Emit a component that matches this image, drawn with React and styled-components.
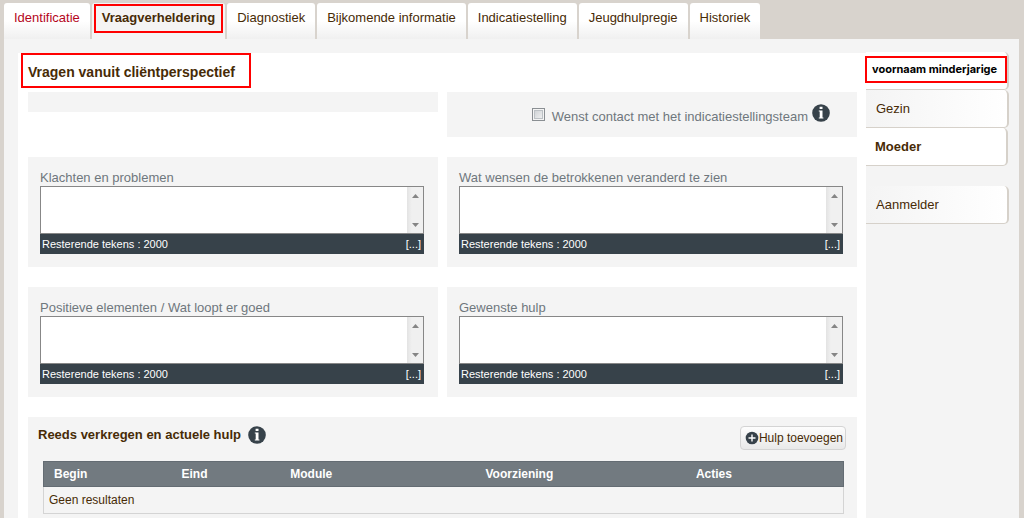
import React, { useId } from "react";
import styled, { createGlobalStyle, css } from "styled-components";

const color = {
  page: "#d8d3cd",
  panel: "#f4f4f4",
  text: "#472b06",
  label: "#6f777d",
  dark: "#37424a",
  head: "#727a80",
  line: "#d6d1ca",
  mark: "#ff0000",
};

const GlobalStyle = createGlobalStyle`
  *, *::before, *::after { box-sizing: border-box; }
  body {
    margin: 0;
    background: ${color.page};
    color: ${color.text};
    font: 13px/16px "Liberation Sans", Arial, sans-serif;
  }
  button, input, textarea { font: inherit; color: inherit; margin: 0; }
`;

const Page = styled.div`
  display: flex;
  flex-direction: column;
  min-height: 100vh;
  padding: 3px 5px 0 4px;
`;

const Tabs = styled.nav`
  display: flex;
  gap: 2px;
`;

const Tab = styled.a`
  position: relative;
  height: 36px;
  padding: 7px 10px 0;
  border-radius: 3px 3px 0 0;
  background: linear-gradient(#fff 50%, #f0f0f0);
  color: ${(p) => (p.$alert ? "#b5061c" : color.text)};
  text-decoration: none;
  white-space: nowrap;
  ${(p) =>
    p.$active &&
    css`
      background: ${color.panel};
      font-weight: bold;
    `}
`;

const Mark = styled.span`
  position: absolute;
  inset: ${(p) => p.$inset};
  border: 2px solid ${color.mark};
  pointer-events: none;
`;

const Panel = styled.div`
  flex: 1;
  display: flex;
  padding: 14px 10px 0 14px;
  background: ${color.panel};
`;

const Main = styled.main`
  flex: 1;
  display: flex;
  flex-direction: column;
  gap: 20px;
  min-width: 0;
  padding: 0 9px 0 10px;
  background: #fff;
`;

const Title = styled.h1`
  position: relative;
  align-self: flex-start;
  margin: 0 0 -16px;
  padding: 11px 16px 8px 0;
  font-size: 14px;
  line-height: 16px;
`;

const Columns = styled.div`
  display: grid;
  grid-template-columns: 1fr 1fr;
  align-items: start;
  gap: 20px 9px;
`;

const Card = styled.section`
  min-height: ${(p) => (p.$empty ? "20px" : "0")};
  padding: ${(p) => (p.$empty ? "0" : "12px 14px 13px 12px")};
  background: ${color.panel};
`;

const ContactCard = styled(Card)`
  display: flex;
  justify-content: flex-end;
  gap: 4px;
  height: 45px;
  padding: 12px 27px 0 12px;
`;

const CheckLabel = styled.label`
  display: flex;
  align-items: flex-start;
  gap: 7px;
  padding-top: 4px;
  color: ${color.label};
  line-height: 18px;
`;

const Check = styled.input`
  appearance: none;
  width: 13px;
  height: 13px;
  border: 1px solid #8a8f93;
  background: linear-gradient(135deg, #c8ccd0, #f6f6f6);
  box-shadow: inset 0 0 0 1px #f4f4f4, inset 0 0 0 2px #bcc1c5;
`;

const FieldLabel = styled.label`
  display: block;
  height: 17px;
  color: ${color.label};
  line-height: 18px;
`;

const FieldBox = styled.div`
  display: flex;
  height: 48px;
  border: 1px solid #878787;
  background: #fff;
`;

const Area = styled.textarea`
  flex: 1;
  min-width: 0;
  padding: 2px;
  border: 0;
  outline: 0;
  resize: none;
  overflow: hidden;
  background: transparent;
`;

const ScrollStrip = styled.span`
  display: flex;
  flex-direction: column;
  justify-content: space-between;
  align-items: center;
  width: 16px;
  padding: 7px 0 6px;
  background: linear-gradient(90deg, #e3e3e3, #f0f0f0 30%);
`;

const FieldFoot = styled.div`
  display: flex;
  justify-content: space-between;
  height: 20px;
  padding: 0 3px 0 2px;
  background: ${color.dark};
  color: #fff;
  font-size: 11px;
  line-height: 20px;
`;

const MoreLink = styled.a`
  color: inherit;
  text-decoration: none;
`;

const HelpSection = styled.section`
  flex: 1;
  padding: 9px 11px 3px 10px;
  background: ${color.panel};
`;

const HelpHead = styled.header`
  display: flex;
  justify-content: space-between;
  align-items: flex-start;
  margin-bottom: 11px;
`;

const HelpTitle = styled.h2`
  display: flex;
  align-items: center;
  gap: 7px;
  margin: 0;
  font-size: 13px;
  line-height: 16px;
`;

const AddButton = styled.button`
  display: flex;
  align-items: center;
  height: 24px;
  padding: 0 2px 0 4px;
  border: 1px solid #d4d4d4;
  border-radius: 4px;
  background: linear-gradient(#fdfdfd, #e9e9e9);
  font-size: 12px;
  white-space: nowrap;
`;

const Table = styled.table`
  width: calc(100% - 7px);
  margin-left: 5px;
  border: 1px solid #d4d4d4;
  border-collapse: collapse;
  table-layout: fixed;
  font-size: 12px;
  line-height: 16px;
`;

const HeadRow = styled.tr`
  height: 25px;
  border: 1px solid #646c73;
  background: ${color.head};
  color: #fff;
`;

const HeadCell = styled.th`
  width: ${(p) => p.$width};
  padding: 0 10px;
  text-align: left;
`;

const Cell = styled.td`
  height: 27px;
  padding: 0 5px;
`;

const Side = styled.nav`
  display: flex;
  flex-direction: column;
  align-items: flex-start;
  width: 143px;
  margin-top: -1px;
`;

const SideLink = styled.a`
  position: relative;
  width: ${(p) => (p.$active ? "142px" : "143px")};
  height: 38px;
  margin-top: ${(p) => (p.$apart ? "20px" : "0")};
  padding: 11px 0 0 ${(p) => (p.$active ? "9px" : "10px")};
  border: solid ${color.line};
  border-width: 0 2px 1px 0;
  border-radius: 0 5px 5px 0;
  background: ${(p) => (p.$active ? "#fff" : "linear-gradient(90deg, #f4f4f4, #fff)")};
  color: ${color.text};
  font-weight: ${(p) => (p.$active ? "bold" : "normal")};
  text-decoration: none;
`;

const ChildLink = styled(SideLink)`
  padding: 10px 0 0 6px;
  color: #000;
  font: bold 11px/15px Inter, sans-serif;
  background: #fff;
  white-space: nowrap;
`;

function InfoIcon() {
  return (
    <svg width="18" height="18" viewBox="0 0 18 18" role="img" aria-label="Info">
      <circle cx="9" cy="9" r="8.8" fill={color.dark} />
      <path d="M7.6 2.8h2.9v2.2H7.6zM6.8 6.4h3.7v7.2h.9v1H6.8v-1h.9V7.4h-.9z" fill="#fff" />
    </svg>
  );
}

function PlusIcon() {
  return (
    <svg width="14" height="14" viewBox="0 0 14 14" aria-hidden="true">
      <circle cx="7" cy="7" r="6.3" fill={color.dark} />
      <path d="M7 3.5v7M3.5 7h7" stroke="#fff" strokeWidth="1.4" />
    </svg>
  );
}

function Arrow({ down }) {
  return (
    <svg width="7" height="4" viewBox="0 0 7 4" aria-hidden="true">
      <path d={down ? "M0 0h7L3.5 4z" : "M0 4h7L3.5 0z"} fill="#858585" />
    </svg>
  );
}

function TextField({ label }) {
  const id = useId();
  return (
    <Card>
      <FieldLabel htmlFor={id}>{label}</FieldLabel>
      <FieldBox>
        <Area id={id} maxLength={2000} />
        <ScrollStrip aria-hidden="true">
          <Arrow />
          <Arrow down />
        </ScrollStrip>
      </FieldBox>
      <FieldFoot>
        <span>Resterende tekens : 2000</span>
        <MoreLink href="#meer">[...]</MoreLink>
      </FieldFoot>
    </Card>
  );
}

const fields = [
  "Klachten en problemen",
  "Wat wensen de betrokkenen veranderd te zien",
  "Positieve elementen / Wat loopt er goed",
  "Gewenste hulp",
];

const columns = [
  ["Begin", "16%"],
  ["Eind", "13.6%"],
  ["Module", "24.4%"],
  ["Voorziening", "26.3%"],
  ["Acties", "19.7%"],
];

export default function App() {
  return (
    <Page>
      <GlobalStyle />
      <Tabs>
        <Tab href="#identificatie" $alert>Identificatie</Tab>
        <Tab href="#vraagverheldering" $active aria-current="page">
          Vraagverheldering
          <Mark $inset="1px 2px 6px 2px" />
        </Tab>
        <Tab href="#diagnostiek">Diagnostiek</Tab>
        <Tab href="#bijkomende-informatie">Bijkomende informatie</Tab>
        <Tab href="#indicatiestelling">Indicatiestelling</Tab>
        <Tab href="#jeugdhulpregie">Jeugdhulpregie</Tab>
        <Tab href="#historiek">Historiek</Tab>
      </Tabs>
      <Panel>
        <Main>
          <Title>
            Vragen vanuit cliëntperspectief
            <Mark $inset="0 0 0 -7px" />
          </Title>
          <Columns>
            <Card $empty />
            <ContactCard>
              <CheckLabel>
                <Check type="checkbox" />
                Wenst contact met het indicatiestellingsteam
              </CheckLabel>
              <InfoIcon />
            </ContactCard>
            {fields.map((label) => (
              <TextField key={label} label={label} />
            ))}
          </Columns>
          <HelpSection>
            <HelpHead>
              <HelpTitle>
                Reeds verkregen en actuele hulp
                <InfoIcon />
              </HelpTitle>
              <AddButton type="button">
                <PlusIcon />
                Hulp toevoegen
              </AddButton>
            </HelpHead>
            <Table>
              <thead>
                <HeadRow>
                  {columns.map(([name, width]) => (
                    <HeadCell key={name} scope="col" $width={width}>{name}</HeadCell>
                  ))}
                </HeadRow>
              </thead>
              <tbody>
                <tr>
                  <Cell colSpan={5}>Geen resultaten</Cell>
                </tr>
              </tbody>
            </Table>
          </HelpSection>
        </Main>
        <Side>
          <ChildLink href="#minderjarige">
            voornaam minderjarige
            <Mark $inset="4px 0 6px -1px" />
          </ChildLink>
          <SideLink href="#gezin">Gezin</SideLink>
          <SideLink href="#moeder" $active>Moeder</SideLink>
          <SideLink href="#aanmelder" $apart>Aanmelder</SideLink>
        </Side>
      </Panel>
    </Page>
  );
}
